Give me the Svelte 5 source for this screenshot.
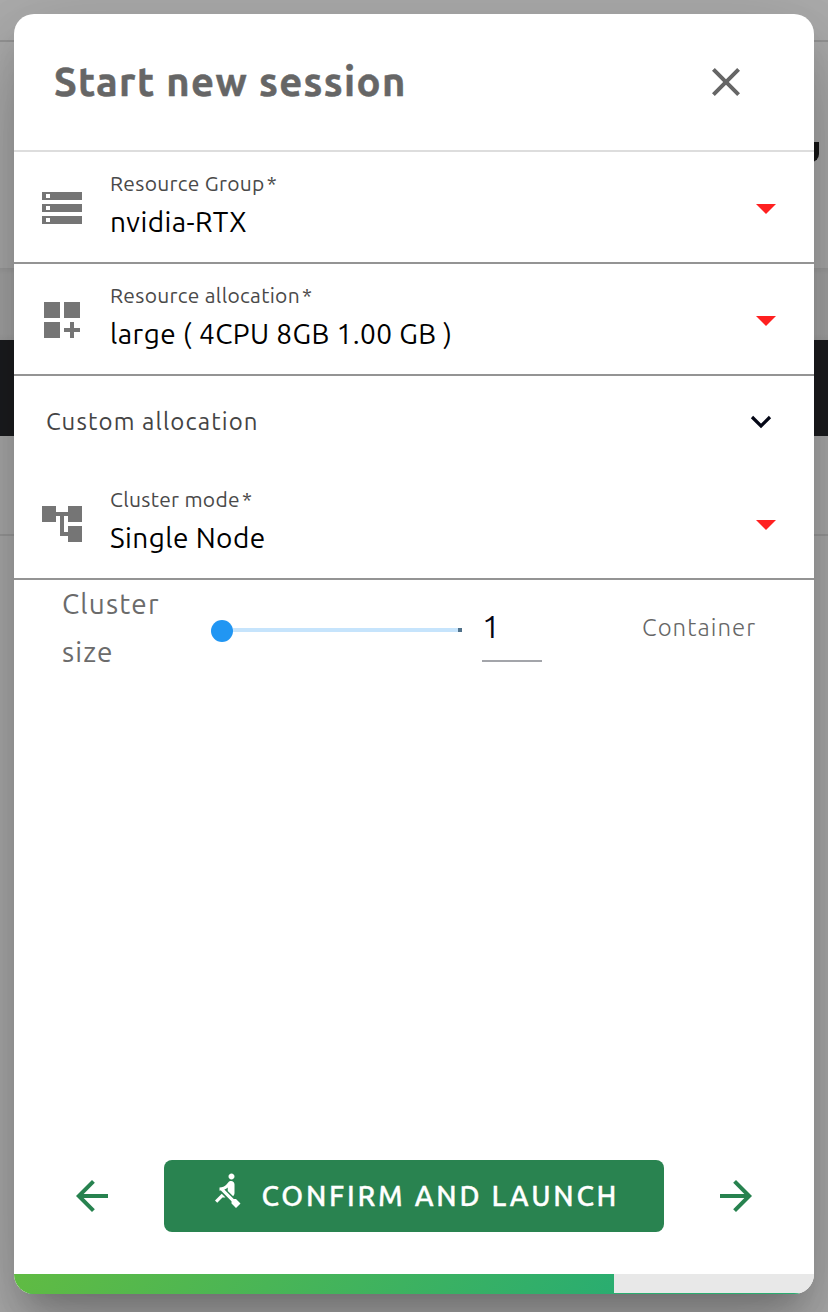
<script>
  const storage = 'M2 20h20v-4H2v4zm2-3h2v2H4v-2zM2 4v4h20V4H2zm4 3H4V5h2v2zm-4 7h20v-4H2v4zm2-3h2v2H4v-2z';
  const widgets = 'M3 3h8v8H3zM13 3h8v8h-8zM3 13h8v8H3zM18 13h-2v3h-3v2h3v3h2v-3h3v-2h-3z';
  const tree = 'M22 11V3h-7v3H9V3H2v8h7V8h2v10h4v3h7v-8h-7v3h-2V8h2v3z';
</script>

{#snippet field(icon, label, value)}
  <div class="field">
    <svg class="lead" viewBox="0 0 24 24"><path d={icon} /></svg>
    <div class="copy">
      <span class="label">{label}<i>*</i></span>
      <span class="value">{value}</span>
    </div>
    <svg class="caret" viewBox="0 0 20 10"><path d="M0 0h20L10 10z" /></svg>
  </div>
{/snippet}

<div class="page">
  <div class="behind">
    <div class="bar top"></div>
    <div class="bar head"><span class="tail"></span></div>
    <div class="bar tabs"></div>
    <div class="bar dark"></div>
    <div class="bar filter"></div>
  </div>
  <div class="scrim"></div>
  <div class="dialog">
    <header>
      <h1>Start new session</h1>
      <svg class="close" viewBox="0 0 24 24"><path d="M19 6.41 17.59 5 12 10.59 6.41 5 5 6.41 10.59 12 5 17.59 6.41 19 12 13.41 17.59 19 19 17.59 13.41 12z" /></svg>
    </header>
    {@render field(storage, 'Resource Group', 'nvidia-RTX')}
    {@render field(widgets, 'Resource allocation', 'large ( 4CPU 8GB 1.00 GB )')}
    <div class="custom">
      <span>Custom allocation</span>
      <svg viewBox="0 0 22 14"><path d="M2 2l9 9 9-9" /></svg>
    </div>
    {@render field(tree, 'Cluster mode', 'Single Node')}
    <div class="size">
      <div class="name">Cluster<br />size</div>
      <div class="slider"><span class="knob"></span><span class="track"></span><span class="end"></span></div>
      <div class="num">1</div>
      <div class="unit">Container</div>
    </div>
    <footer>
      <svg class="arrow" viewBox="0 0 24 24"><path d="M20 11H7.83l5.59-5.59L12 4l-8 8 8 8 1.41-1.41L7.83 13H20v-2z" /></svg>
      <button>
        <svg viewBox="0 0 24 24"><path d="M8.5 14.5L4 19l1.5 1.5L9 17h2l-2.5-2.5zM15 1c-1.1 0-2 .9-2 2s.9 2 2 2 2-.9 2-2-.9-2-2-2zm6 20.01L18 24l-2.99-3.01V19.5l-7.1-7.09c-.31.05-.61.07-.91.07v-2.16c1.66.03 3.61-.87 4.67-2.04l1.4-1.55c.19-.21.43-.38.69-.5.29-.14.62-.23.96-.23h.03C15.99 6.01 17 7.02 17 8.26v5.75c0 .84-.35 1.61-.92 2.16l-3.58-3.58v-2.27c-.63.52-1.43 1.02-2.29 1.39L16.5 18H18l3 3.01z" /></svg>
        <span>CONFIRM AND LAUNCH</span>
      </button>
      <svg class="arrow" viewBox="0 0 24 24"><path d="M12 4l-1.41 1.41L16.17 11H4v2h12.17l-5.58 5.59L12 20l8-8z" /></svg>
    </footer>
    <div class="progress"><div class="done"></div></div>
  </div>
</div>

<style>
  .page { position: relative; width: 828px; height: 1312px; box-sizing: border-box; padding: 14px; overflow: hidden; background: #fff; font-family: Ubuntu, 'Noto Sans', sans-serif; }
  .page * { box-sizing: border-box; }
  .behind, .scrim { position: absolute; inset: 0; }
  .scrim { background: rgba(0, 0, 0, 0.32); }
  .top { height: 42px; border-bottom: 2px solid #ddd; }
  .head { height: 226px; padding: 100px 9px 0 0; display: flex; justify-content: flex-end; }
  .tail { width: 20px; height: 20px; border: solid #222; border-width: 0 5px 5px 0; border-radius: 0 0 8px 0; }
  .tabs { height: 72px; background: linear-gradient(#eaeaea, #f6f6f6 6px, #f6f6f6 66px, #eee); }
  .dark { height: 96px; background: #2a2c30; }
  .filter { height: 100px; border-bottom: 2px solid #e6e6e6; }
  .dialog { position: relative; height: 1280px; border-radius: 20px; overflow: hidden; display: flex; flex-direction: column; background: #fff;
    box-shadow: 0 22px 30px -14px rgba(0, 0, 0, 0.2), 0 48px 76px 6px rgba(0, 0, 0, 0.14), 0 18px 92px 16px rgba(0, 0, 0, 0.12); }
  header { height: 138px; flex: none; border-bottom: 2px solid #ddd; display: flex; align-items: center; justify-content: space-between; padding: 0 64px 0 40px; }
  h1 { margin: 0; font-size: 40px; line-height: 48px; font-weight: 700; color: #666; letter-spacing: 1.35px; -webkit-text-stroke: 0.5px #666; white-space: nowrap; }
  .close { width: 48px; height: 48px; fill: #666; }
  .field { height: 112px; flex: none; border-bottom: 2px solid #949494; display: flex; align-items: center; padding: 2px 38px 0 24px; }
  .lead { width: 48px; height: 48px; fill: #757575; flex: none; }
  .copy { flex: 1; margin-left: 24px; display: flex; flex-direction: column; height: 76px; white-space: nowrap; }
  .label { font-size: 21px; line-height: 26px; padding-bottom: 2px; color: #494949; letter-spacing: 0.3px; }
  .label i { font-style: normal; margin-left: 2px; }
  .value { font-size: 28px; line-height: 48px; color: #000; letter-spacing: 0.42px; }
  .caret { width: 20px; height: 10px; fill: #ff2020; margin-top: 2px; }
  .custom { height: 92px; flex: none; display: flex; align-items: center; justify-content: space-between; padding: 0 42px 2px 32px; font-size: 24px; color: #444; letter-spacing: 1.12px; }
  .custom svg { width: 22px; height: 14px; margin-top: 1px; fill: none; stroke: #040716; stroke-width: 3.2; }
  .size { height: 96px; flex: none; display: flex; align-items: center; padding-left: 48px; }
  .name { width: 149px; font-size: 28px; line-height: 48px; color: #6b6b6b; letter-spacing: 1.15px; }
  .slider { width: 251px; display: flex; align-items: center; padding-top: 4px; }
  .knob { width: 22px; height: 22px; border-radius: 50%; background: #2196f3; margin-top: 2px; }
  .track { flex: 1; height: 4px; background: #c6e4fc; }
  .end { width: 4px; height: 4px; background: #50718a; }
  .num { width: 60px; height: 64px; margin: 4px 0 0 20px; border-bottom: 2px solid #a3a5aa; font-size: 32px; line-height: 56px; color: #040716; }
  .unit { margin-left: 100px; padding-bottom: 2px; font-size: 24px; font-weight: 300; color: #666; letter-spacing: 1.05px; }
  footer { margin-top: auto; height: 72px; margin-bottom: 42px; flex: none; display: flex; align-items: center; justify-content: space-between; padding: 0 54px; }
  .arrow { width: 48px; height: 48px; fill: #27824f; }
  button { width: 500px; height: 72px; border: 0; border-radius: 8px; padding: 0 0 0 45px; background: #298350; display: flex; align-items: center; color: #fff; font: 500 28px/36px Ubuntu, 'Noto Sans', sans-serif; letter-spacing: 2.75px; -webkit-text-stroke: 0.35px #fff; white-space: nowrap; }
  button svg { width: 36px; height: 36px; fill: #fff; margin: -12px 16.5px 0 0; flex: none; }
  .progress { height: 20px; flex: none; background: #e8e8e8; border-bottom: 1px solid #2aad70; }
  .done { width: 75%; height: 20px; background: linear-gradient(120deg, #60bb43, #2aad70); }
</style>
